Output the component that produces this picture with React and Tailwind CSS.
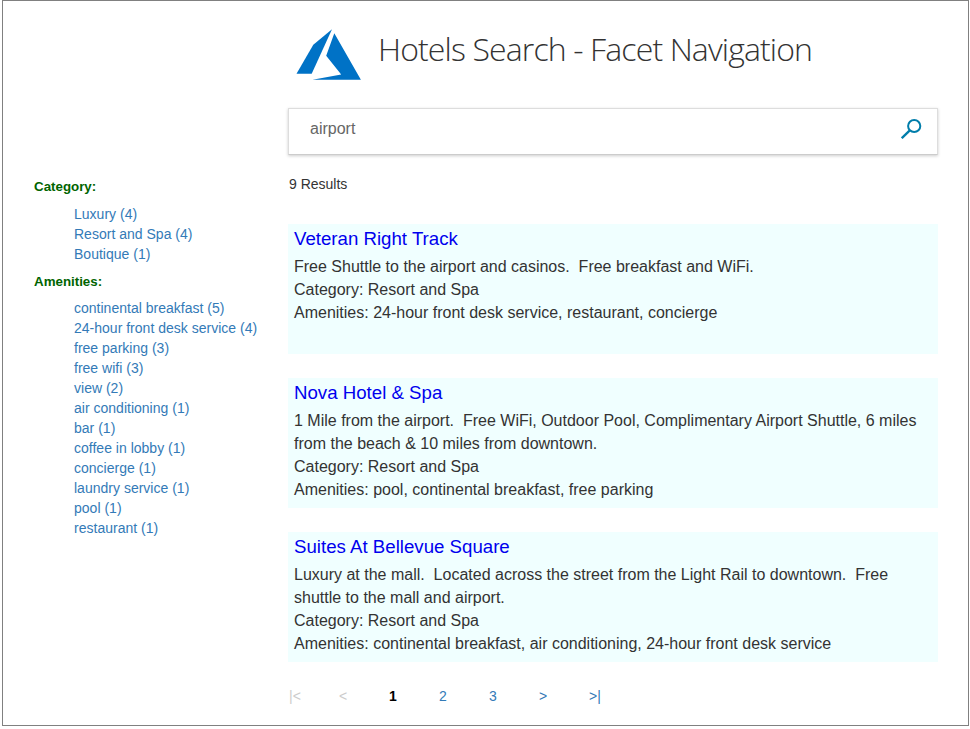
const facets = [
  { title: 'Category:', gap: 'mb-[7px]', items: ['Luxury (4)', 'Resort and Spa (4)', 'Boutique (1)'] },
  {
    title: 'Amenities:',
    gap: 'mb-[6px]',
    items: [
      'continental breakfast (5)', '24-hour front desk service (4)', 'free parking (3)', 'free wifi (3)',
      'view (2)', 'air conditioning (1)', 'bar (1)', 'coffee in lobby (1)', 'concierge (1)',
      'laundry service (1)', 'pool (1)', 'restaurant (1)',
    ],
  },
];

const hotels = [
  {
    name: 'Veteran Right Track',
    description: ['Free Shuttle to the airport and casinos.\u00a0 Free breakfast and WiFi.'],
    category: 'Resort and Spa',
    amenities: '24-hour front desk service, restaurant, concierge',
  },
  {
    name: 'Nova Hotel & Spa',
    description: [
      '1 Mile from the airport.\u00a0 Free WiFi, Outdoor Pool, Complimentary Airport Shuttle, 6 miles',
      'from the beach & 10 miles from downtown.',
    ],
    category: 'Resort and Spa',
    amenities: 'pool, continental breakfast, free parking',
  },
  {
    name: 'Suites At Bellevue Square',
    description: [
      'Luxury at the mall.\u00a0 Located across the street from the Light Rail to downtown.\u00a0 Free',
      'shuttle to the mall and airport.',
    ],
    category: 'Resort and Spa',
    amenities: 'continental breakfast, air conditioning, 24-hour front desk service',
  },
];

const pages = [
  { label: '|<', style: 'w-[50px] text-[#cccccc]' },
  { label: '<', style: 'w-[50px] text-[#cccccc]' },
  { label: '1', style: 'w-[50px] font-bold text-black' },
  { label: '2', style: 'w-[50px] text-[#337ab7]' },
  { label: '3', style: 'w-[50px] text-[#337ab7]' },
  { label: '>', style: 'w-[50px] text-[#337ab7]' },
  { label: '>|', style: 'w-[50px] text-[#337ab7]' },
];

function Logo() {
  return (
    <svg width="65" height="52" viewBox="0 0 65 52" fill="#0072c6" className="mt-[27px] shrink-0">
      <path d="M36 1.2 17.3 16.7 .5 45.8h15.2z" />
      <path d="M38.3 5.2 30.2 27.7 45.2 46.4 16.5 51.8h48.4z" />
    </svg>
  );
}

function Header() {
  return (
    <header className="flex h-[107px] pl-[293px]">
      <Logo />
      <h1 className="ml-[17px] mt-[26px] whitespace-nowrap font-['Open_Sans',sans-serif] text-[32px] font-light leading-[44px] tracking-[-0.87px] text-[#333333]">
        Hotels Search - Facet Navigation
      </h1>
    </header>
  );
}

function Sidebar() {
  return (
    <aside className="w-[285px] shrink-0 pl-[31px] pt-[69px] text-[14px] leading-5">
      {facets.map((f) => (
        <section key={f.title} className="mb-2">
          <h2 className={`text-[13.33px] font-bold text-[#006400] ${f.gap}`}>{f.title}</h2>
          <ul className="pl-10 text-[#337ab7]">
            {f.items.map((i) => <li key={i} className="whitespace-nowrap tracking-[0.01px]">{i}</li>)}
          </ul>
        </section>
      ))}
    </aside>
  );
}

function SearchBox() {
  return (
    <div className="flex h-[47px] justify-between border border-[#dddddd] border-b-[#cccccc] pl-[21px] pr-[15px] shadow-[0_1px_3px_rgba(0,0,0,0.2)]">
      <span className="mt-[9px] text-[16px] leading-[22px] text-[#666666]">airport</span>
      <svg width="21" height="22" viewBox="0 0 21 22" fill="none" stroke="#007daa" strokeWidth="2" className="mt-[9px]">
        <circle cx="13.2" cy="8" r="6.1" />
        <path d="M8.8 12.4.8 20.2" strokeWidth="2.3" />
      </svg>
    </div>
  );
}

function Hotel({ hotel }) {
  return (
    <article className="h-[130px] bg-[#f0ffff] pl-[6px] pt-[3px] text-[16px] leading-[23px] text-[#333333]">
      <h3 className="mb-[4px] text-[18.67px] leading-6 text-[#0000ee]">{hotel.name}</h3>
      {hotel.description.map((line) => <p key={line} className="whitespace-nowrap">{line}</p>)}
      <p>Category: {hotel.category}</p>
      <p className="whitespace-nowrap">Amenities: {hotel.amenities}</p>
    </article>
  );
}

export default function App() {
  return (
    <div className="h-[729px] w-[970px] bg-white pl-[2px] font-['Liberation_Sans',Arial,sans-serif]">
      <div className="h-[726px] w-[967px] border border-[#808080]">
        <Header />
        <div className="flex">
          <Sidebar />
          <main className="w-[650px]">
            <SearchBox />
            <p className="mt-[19px] pl-px text-[14px] leading-5 text-[#333333]">9 Results</p>
            <div className="mt-[30px] flex flex-col gap-6">
              {hotels.map((h) => <Hotel key={h.name} hotel={h} />)}
            </div>
            <nav className="mt-[24px] flex pl-px text-[14px] leading-5">
              {pages.map((p) => <span key={p.label} className={p.style}>{p.label}</span>)}
            </nav>
          </main>
        </div>
      </div>
    </div>
  );
}
